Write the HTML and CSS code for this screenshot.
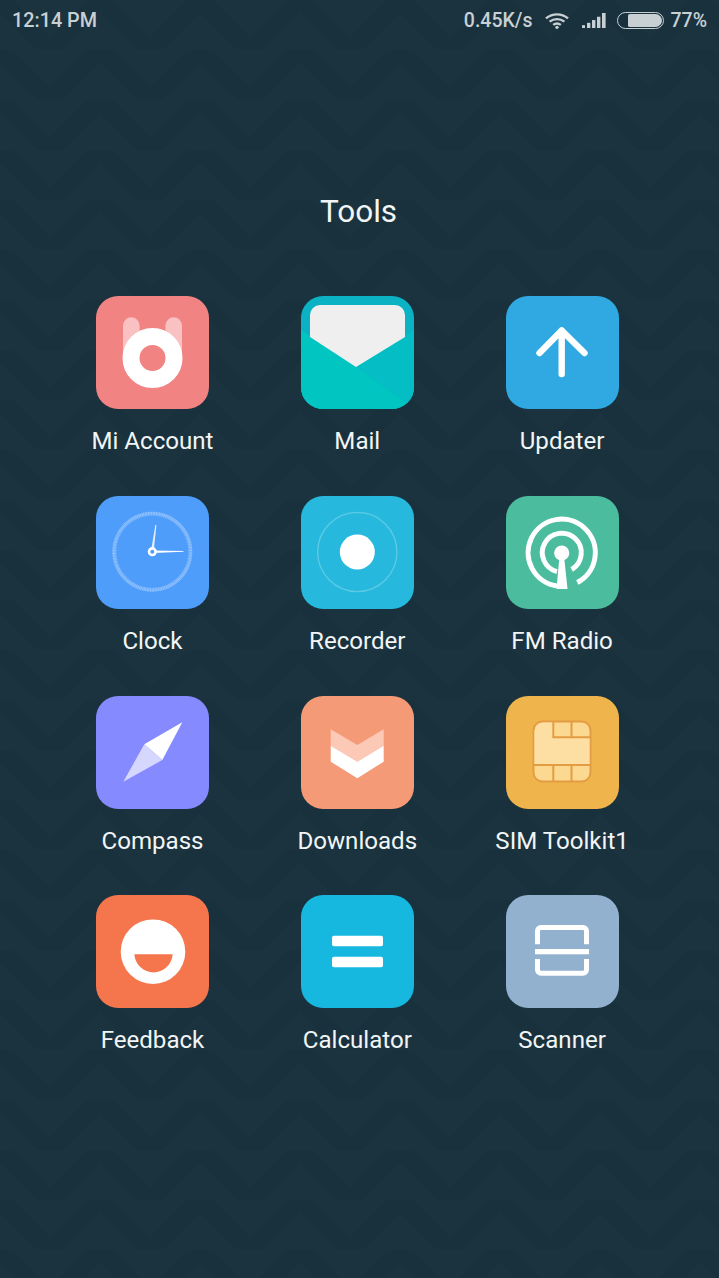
FILE: index.html
```html
<!DOCTYPE html>
<html lang="en">
<head>
    <meta charset="UTF-8">
    <meta name="viewport" content="width=device-width, initial-scale=1.0">
    <title>Tools</title>
    <link rel="stylesheet" href="styles.css">
</head>
<body>

    <div class="statusbar">
        <span class="time">12:14 PM</span>
        <div class="status-right">
            <span class="speed">0.45K/s</span>
            <svg class="wifi" width="24" height="16" viewBox="0 0 24 17" preserveAspectRatio="none">
                <path d="M1 5.6C7.5 0 16.5 0 23 5.6" />
                <path d="M4.6 9.2C9 5.5 15 5.5 19.4 9.2" />
                <path d="M8.2 12.6C10.4 10.9 13.6 10.9 15.8 12.6" />
                <circle cx="12" cy="15.2" r="1.7" />
            </svg>
            <svg class="signal" width="24" height="15" viewBox="0 0 24 16" preserveAspectRatio="none">
                <rect x="0" y="13" width="3" height="3" />
                <rect x="5" y="10.5" width="3.4" height="5.5" />
                <rect x="10" y="7.5" width="3.4" height="8.5" />
                <rect x="15" y="4" width="3.4" height="12" />
                <rect x="20" y="0" width="3.6" height="16" />
            </svg>
            <div class="battery"><div class="battery-fill"></div></div>
            <span class="percent">77%</span>
        </div>
    </div>

    <h1 class="folder-title">Tools</h1>

    <div class="app-grid">

        <div class="app">
            <div class="icon icon-account">
                <svg viewBox="0 0 113 113">
                    <path class="soft" d="M27 60V29.5a8.3 8.3 0 0 1 16.6 0V60Z" />
                    <path class="soft" d="M69.4 60V29.5a8.3 8.3 0 0 1 16.6 0V60Z" />
                    <circle cx="56.5" cy="62" r="21.5" fill="none" stroke="#fff" stroke-width="17" />
                </svg>
            </div>
            <span class="label">Mi Account</span>
        </div>

        <div class="app">
            <div class="icon icon-mail">
                <svg viewBox="0 0 113 113">
                    <path fill="#01c5c0" d="M0 34L55 71L113 34V113H0Z" />
                    <path fill="#05bdc4" d="M55 71L113 34V113Z" />
                    <path fill="#01c5c0" d="M55 71L104 108L96 113H0V34Z" />
                    <path fill="#efefef" d="M9 19A10 10 0 0 1 19 9H94A10 10 0 0 1 104 19V41L55 71L9 41Z" />
                </svg>
            </div>
            <span class="label">Mail</span>
        </div>

        <div class="app">
            <div class="icon icon-updater">
                <svg viewBox="0 0 113 113">
                    <path fill="none" stroke="#fff" stroke-width="6.4" stroke-linecap="round" stroke-linejoin="round" d="M33.5 57L55.7 34.5L78.5 57M55.7 34.5V78" />
                </svg>
            </div>
            <span class="label">Updater</span>
        </div>

        <div class="app">
            <div class="icon icon-clock">
                <svg viewBox="0 0 113 113">
                    <circle cx="56.3" cy="55.7" r="38" fill="none" stroke="#fff" stroke-opacity=".3" stroke-width="4" stroke-dasharray="1 .6" />
                    <circle cx="56.3" cy="55.7" r="38.5" fill="none" stroke="#fff" stroke-opacity=".12" stroke-width="3" />
                    <path fill="#fff" fill-opacity=".85" d="M55 55L59.4 29H60.4L57.6 56Z" />
                    <path fill="#fff" d="M57 54.6L87.5 55V55.8L57 57Z" />
                    <circle cx="56.3" cy="55.7" r="3.3" fill="#4f9dfb" stroke="#fff" stroke-width="2.6" />
                </svg>
            </div>
            <span class="label">Clock</span>
        </div>

        <div class="app">
            <div class="icon icon-recorder">
                <svg viewBox="0 0 113 113">
                    <circle cx="56.3" cy="56" r="39.6" fill="none" stroke="#fff" stroke-opacity=".25" stroke-width="1.3" />
                    <circle cx="56.3" cy="56" r="17.5" fill="#fff" />
                </svg>
            </div>
            <span class="label">Recorder</span>
        </div>

        <div class="app">
            <div class="icon icon-radio">
                <svg viewBox="0 0 113 113">
                    <g fill="none" stroke="#fff" stroke-width="5" stroke-linecap="round">
                        <path d="M51 90A33.6 33.6 0 1 1 71.3 86.5" stroke-linecap="butt" />
                        <path d="M51 75.6A19.5 19.5 0 1 1 65.7 73.5" stroke-linecap="butt" />
                    </g>
                    <circle cx="55.7" cy="57" r="7.6" fill="#fff" />
                    <path fill="#fff" d="M53.5 60H58L61.5 93H50.5Z" />
                </svg>
            </div>
            <span class="label">FM Radio</span>
        </div>

        <div class="app">
            <div class="icon icon-compass">
                <svg viewBox="0 0 113 113">
                    <path fill="#fff" d="M86.3 26.3L66.3 64L48.3 48.3Z" />
                    <path fill="#d5d7ff" d="M27.3 85.7L48.3 48.3L66.3 64Z" />
                </svg>
            </div>
            <span class="label">Compass</span>
        </div>

        <div class="app">
            <div class="icon icon-downloads">
                <svg viewBox="0 0 113 113">
                    <path fill="#fbc9b6" d="M29.7 33.3L56.3 49L82.7 33.3V49.7L56.3 65.7L29.7 49.7Z" />
                    <path fill="#fff" d="M29.7 49.7L56.3 65.7L82.7 49.7V65.7L56.3 82.3L29.7 65.7Z" />
                </svg>
            </div>
            <span class="label">Downloads</span>
        </div>

        <div class="app">
            <div class="icon icon-sim">
                <svg viewBox="0 0 113 113">
                    <rect x="27.5" y="25.5" width="57" height="60" rx="9" fill="#fcd990" stroke="#e49c42" stroke-width="2" />
                    <path fill="#fddfa3" d="M28.5 35.5A9 9 0 0 1 36.5 26.5H47.3V41.3H83.5V69H28.5Z" />
                    <path fill="none" stroke="#e49c42" stroke-width="2" d="M47.3 25.5V41.3H84.5M65.5 25.5V41.3M27.5 69H84.5M47.3 69V85.5M65.5 69V85.5" />
                </svg>
            </div>
            <span class="label">SIM Toolkit1</span>
        </div>

        <div class="app">
            <div class="icon icon-feedback">
                <svg viewBox="0 0 113 113">
                    <circle cx="57" cy="56.7" r="32.3" fill="#fff" />
                    <path fill="#f5764c" d="M38.3 59.3H76.7C76 70 67 77.5 57.5 77.5S39 70 38.3 59.3Z" />
                </svg>
            </div>
            <span class="label">Feedback</span>
        </div>

        <div class="app">
            <div class="icon icon-calculator">
                <svg viewBox="0 0 113 113">
                    <rect x="31" y="40.7" width="51" height="10.6" rx="2" fill="#fff" />
                    <rect x="31" y="61.7" width="51" height="10.6" rx="2" fill="#fff" />
                </svg>
            </div>
            <span class="label">Calculator</span>
        </div>

        <div class="app">
            <div class="icon icon-scanner">
                <svg viewBox="0 0 113 113">
                    <path fill="none" stroke="#fff" stroke-width="5" d="M31.5 49.3V36A3.5 3.5 0 0 1 35 32.5H77A3.5 3.5 0 0 1 80.5 36V49.3M31.5 64V74.7A3.5 3.5 0 0 0 35 78.2H77A3.5 3.5 0 0 0 80.5 74.7V64" />
                    <rect x="29" y="54" width="54" height="5.3" fill="#fff" />
                </svg>
            </div>
            <span class="label">Scanner</span>
        </div>

    </div>

</body>
</html>
```

FILE: styles.css
```css
html, body {
    height: 100%;
}
body {
    margin: 0;
    font-family: Roboto, "Liberation Sans", sans-serif;
    color: #f2f5f6;
    background-color: #19313c;
    /* faint zigzag of the wallpaper */
    background-image:
        linear-gradient(135deg, rgba(255, 255, 255, 0.006) 25%, transparent 25%),
        linear-gradient(225deg, rgba(255, 255, 255, 0.006) 25%, transparent 25%),
        linear-gradient(315deg, rgba(255, 255, 255, 0.006) 25%, transparent 25%),
        linear-gradient(45deg, rgba(255, 255, 255, 0.006) 25%, transparent 25%);
    background-position: -50px 0, -50px 0, 0 0, 0 0;
    background-size: 100px 50px;
    overflow: hidden;
}

/* status bar */
.statusbar {
    display: flex;
    justify-content: space-between;
    align-items: center;
    height: 41px;
    padding: 0 12px;
    color: #c8d0d4;
    font-size: 19.8px;
    font-weight: 500;
}
.status-right {
    display: flex;
    align-items: center;
    font-size: 19.5px;
}
.wifi {
    margin-left: 13px;
}
.wifi path {
    fill: none;
    stroke: #c8d0d4;
    stroke-width: 2.4;
}
.wifi circle {
    fill: #c8d0d4;
}
.signal {
    margin-left: 13px;
    fill: #c8d0d4;
}
.battery {
    box-sizing: border-box;
    width: 47px;
    height: 17px;
    margin-left: 11px;
    padding: 1px 1px 1px 10px;
    border: 1.5px solid #c8d0d4;
    border-radius: 9px;
}
.battery-fill {
    height: 100%;
    background-color: #c8d0d4;
    border-radius: 2px 7px 7px 2px;
}
.percent {
    margin-left: 6px;
}

/* folder */
.folder-title {
    margin: 153px 0 0;
    padding-right: 2px;
    text-align: center;
    font-size: 31.5px;
    font-weight: 400;
    line-height: 36px;
}
.app-grid {
    display: grid;
    grid-template-columns: repeat(3, 204.8px);
    grid-auto-rows: 199.8px;
    margin-top: 66px;
    padding-left: 50.1px;
}
.app {
    display: flex;
    flex-direction: column;
    align-items: center;
}
.icon {
    width: 113px;
    height: 113px;
    border-radius: 22px;
    overflow: hidden;
}
.icon svg {
    display: block;
    width: 113px;
    height: 113px;
}
.label {
    margin-top: 17px;
    font-size: 24.1px;
    line-height: 30px;
    white-space: nowrap;
}

/* icon colours */
.icon-account { background-color: #f28383; }
.soft { fill: rgba(255, 255, 255, 0.5); }
.icon-mail { background-color: #0bb2c3; }
.icon-updater { background-color: #30a9e2; }
.icon-clock { background-color: #4f9dfb; }
.icon-recorder { background-color: #27b9dd; }
.icon-radio { background-color: #4cbc9e; }
.icon-compass { background-color: #868aff; }
.icon-downloads { background-color: #f49a77; }
.icon-sim { background-color: #efb54c; }
.icon-feedback { background-color: #f5764c; }
.icon-calculator { background-color: #17b8e0; }
.icon-scanner { background-color: #91b1cf; }
```
